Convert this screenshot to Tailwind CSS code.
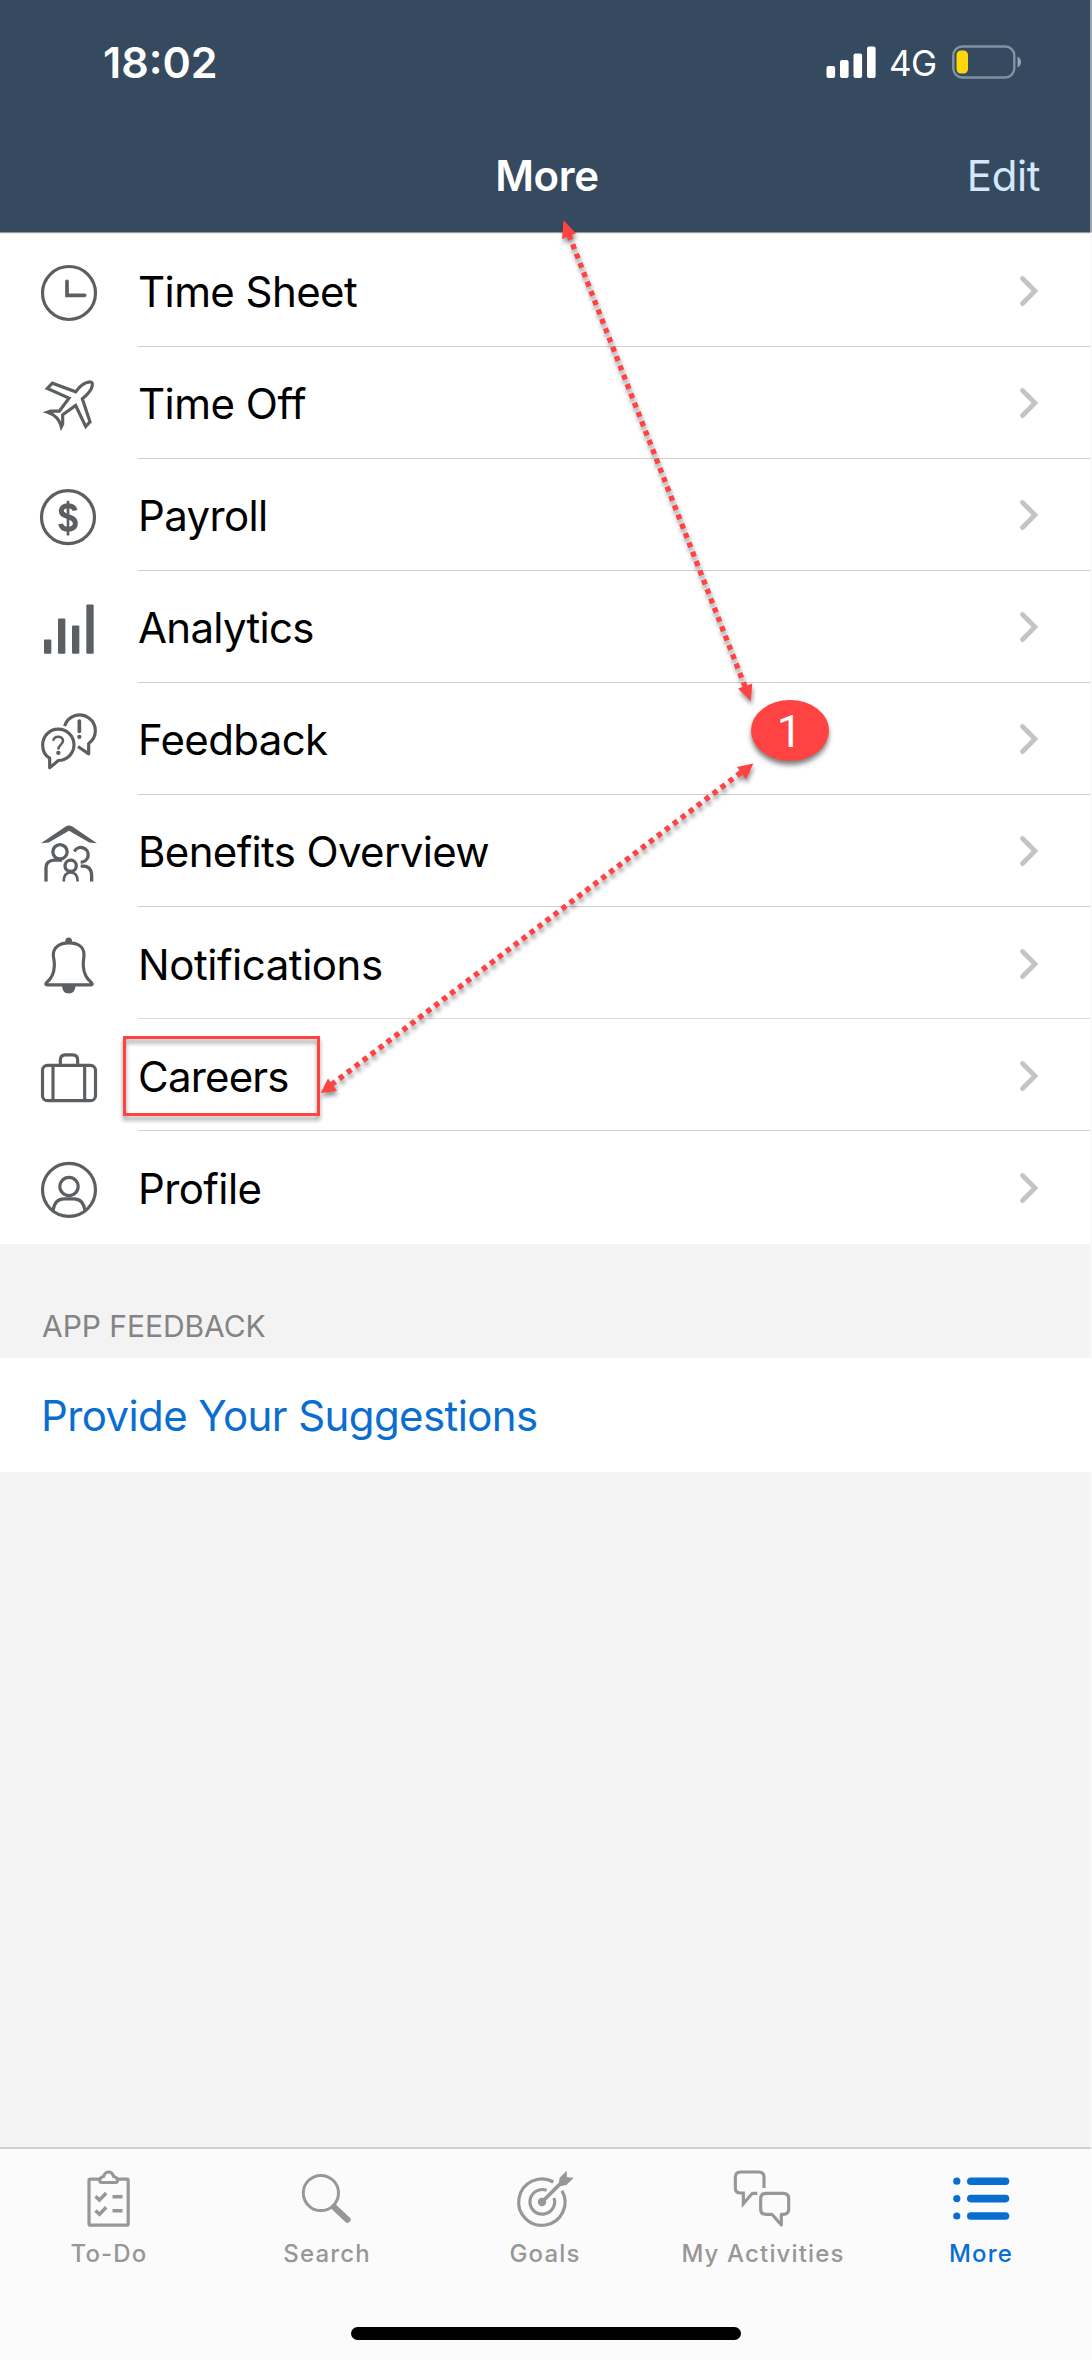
<!DOCTYPE html>
<html lang="en">
<head>
<meta charset="utf-8">
<title>More</title>
<script src="https://cdn.jsdelivr.net/npm/@tailwindcss/browser@4"></script>
</head>
<body class="bg-white">
<div class="relative flex h-[2360px] w-[1092px] flex-col overflow-hidden bg-[#f3f3f3] font-['Inter',sans-serif] text-[42px] leading-[50px] text-black">

  <header class="flex h-[234px] flex-none flex-col border-b border-[#eceae9] bg-[#354a5f]">
    <div class="flex h-[120px] items-center pt-[4px] pr-[70px] pl-[103px] text-white">
      <span class="text-[43px] font-semibold">18:02</span>
      <svg class="ml-auto h-[34px] w-[50px]" viewBox="0 0 50 34" fill="#fff"><rect x="0.5" y="21" width="8.6" height="12" rx="2"/><rect x="14" y="15" width="8.6" height="18" rx="2"/><rect x="27.500" y="8.500" width="8.600" height="24.500" rx="2"/><rect x="41" y="1.500" width="8.600" height="31.500" rx="2"/></svg>
      <span class="ml-[13px] w-[62px] pt-[2px] text-[35px] tracking-[-0.5px]">4G</span>
      <svg class="h-[34px] w-[71px]" viewBox="0 0 71 34"><rect x="2.300" y="1.500" width="61" height="31" rx="9" fill="none" stroke="#8391a0" stroke-width="2.400"/><rect x="5.500" y="5.500" width="11.500" height="23" rx="4.500" fill="#ffd60a"/><path d="M66.500 11.500Q70 13.500 70 17T66.500 22.500Z" fill="#98a3af"/></svg>
    </div>
    <div class="grid h-[113px] flex-none grid-cols-3 items-center border-b border-[#929aa2] pr-[52px] pl-[54px] font-normal">
      <span></span>
      <span class="text-center font-semibold tracking-[-0.35px] text-white">More</span>
      <span class="text-right tracking-[-0.44px] text-[#d1e8ff]">Edit</span>
    </div>
  </header>

  <ul class="flex w-[1090px] flex-none flex-col bg-white">
    <li class="flex h-[113px] items-center pl-[37px]">
      <svg class="h-16 w-16" viewBox="111 84 192 192" fill="none" stroke="#5b5f62" stroke-width="9.500"><circle cx="207" cy="186" r="79.500"/><path d="M201 151V193H254" stroke-width="11" stroke-linecap="round" stroke-linejoin="miter"/></svg>
      <div class="ml-[37px] flex h-full flex-1 items-center justify-between border-b border-[#cfcfd0] pr-[51px]"><span class="pt-[3px] tracking-[-0.57px]">Time Sheet</span><svg class="mt-px h-8 w-5" viewBox="0 0 20 32" fill="none" stroke="#c4c4c6" stroke-width="4.800" stroke-linecap="round"><path d="M3.500 3.500L16 16L3.500 28.500"/></svg></div>
    </li>
    <li class="flex h-[112px] items-center pl-[37px]">
      <svg class="h-16 w-16" viewBox="111 421.500 192 192" fill="none" stroke="#5b5f62" stroke-width="9.500"><path d="M227 484C240 465 256 455 270 454Q278 454 277 464C276 477 264 491 247 505L270 574L257 588L227 525L188 553V581L184 589C180 573 168 553 143 545L152 542H178L207 503L142 474L157 458Z"/></svg>
      <div class="ml-[37px] flex h-full flex-1 items-center justify-between border-b border-[#cfcfd0] pr-[51px]"><span class="pt-[3px] tracking-[-0.5px]">Time Off</span><svg class="mt-px h-8 w-5" viewBox="0 0 20 32" fill="none" stroke="#c4c4c6" stroke-width="4.800" stroke-linecap="round"><path d="M3.500 3.500L16 16L3.500 28.500"/></svg></div>
    </li>
    <li class="flex h-[112px] items-center pl-[37px]">
      <svg class="h-16 w-16" viewBox="111 757.500 192 192" fill="none" stroke="#5b5f62" stroke-width="9.500"><circle cx="204" cy="860" r="79.500"/><path d="M225 840C223 830 216 826 204 826C191 826 184 832 184 841C184 864 226 853 226 879C226 890 217 896 204 896C191 896 184 891 182 880" stroke-width="15"/><path d="M204 811V915" stroke-width="8"/></svg>
      <div class="ml-[37px] flex h-full flex-1 items-center justify-between border-b border-[#cfcfd0] pr-[51px]"><span class="pt-[3px] tracking-[-0.64px]">Payroll</span><svg class="mt-px h-8 w-5" viewBox="0 0 20 32" fill="none" stroke="#c4c4c6" stroke-width="4.800" stroke-linecap="round"><path d="M3.500 3.500L16 16L3.500 28.500"/></svg></div>
    </li>
    <li class="flex h-[112px] items-center pl-[37px]">
      <svg class="h-16 w-16" viewBox="111 73.500 192 192" fill="#5b5f62"><rect x="132" y="207" width="22" height="43" rx="3"/><rect x="174" y="144" width="22" height="106" rx="3"/><rect x="216" y="165" width="22" height="85" rx="3"/><rect x="259" y="102" width="22" height="148" rx="3"/></svg>
      <div class="ml-[37px] flex h-full flex-1 items-center justify-between border-b border-[#cfcfd0] pr-[51px]"><span class="pt-[3px] tracking-[-0.7px]">Analytics</span><svg class="mt-px h-8 w-5" viewBox="0 0 20 32" fill="none" stroke="#c4c4c6" stroke-width="4.800" stroke-linecap="round"><path d="M3.500 3.500L16 16L3.500 28.500"/></svg></div>
    </li>
    <li class="flex h-[112px] items-center pl-[37px]">
      <svg class="h-16 w-16" viewBox="111 409.500 192 192" fill="none" stroke="#5b5f62" stroke-width="9.500"><path d="M149 563C136 555 128 541 128 524A47 47 0 1 1 175 570L149 592Z" stroke-linejoin="round"/><path d="M194 467A47 47 0 1 1 266 519V550L234 528" stroke-linejoin="round"/><path d="M160 511C160 494 189 495 189 511C189 523 175 522 175 537" stroke-width="7.500"/><path d="M238 452V483" stroke-width="11" stroke-linecap="round"/><circle cx="238" cy="499" r="6.500" fill="#5b5f62" stroke="none"/><circle cx="175" cy="547" r="6.500" fill="#5b5f62" stroke="none"/></svg>
      <div class="ml-[37px] flex h-full flex-1 items-center justify-between border-b border-[#cfcfd0] pr-[51px]"><span class="pt-[3px] tracking-[-0.65px]">Feedback</span><svg class="mt-px h-8 w-5" viewBox="0 0 20 32" fill="none" stroke="#c4c4c6" stroke-width="4.800" stroke-linecap="round"><path d="M3.500 3.500L16 16L3.500 28.500"/></svg></div>
    </li>
    <li class="flex h-[112px] items-center pl-[37px]">
      <svg class="h-16 w-16" viewBox="111 745.500 192 192" fill="none" stroke="#5b5f62" stroke-width="10"><path d="M123 818L197 768Q207 762 217 768L291 818L268 816L207 781L146 816Z" fill="#5b5f62" stroke="none"/><circle cx="180" cy="844" r="21.500"/><path d="M223 843A22 22 0 1 1 242 875"/><circle cx="212" cy="886" r="17"/><path d="M138 933V892Q138 871 162 869H186M242 887H252Q275 888 275 918V933"/><path d="M191 933Q191 906 212 906T233 933" stroke-width="8"/></svg>
      <div class="ml-[37px] flex h-full flex-1 items-center justify-between border-b border-[#cfcfd0] pr-[51px]"><span class="pt-[3px] tracking-[-0.65px]">Benefits Overview</span><svg class="mt-px h-8 w-5" viewBox="0 0 20 32" fill="none" stroke="#c4c4c6" stroke-width="4.800" stroke-linecap="round"><path d="M3.500 3.500L16 16L3.500 28.500"/></svg></div>
    </li>
    <li class="flex h-[112px] items-center pl-[37px]">
      <svg class="h-16 w-16" viewBox="111 91.500 192 192" fill="none" stroke="#5b5f62" stroke-width="9.500"><path d="M207 127C179 127 160 140 160 163C160 175 164 178 163 197C162 218 155 234 140 246Q134 253 142 253H272Q280 253 274 246C259 234 251 218 250 197C249 178 252 175 252 163C252 140 235 127 207 127Z"/><path d="M196 126V120Q197 111 206 111T216 120V126ZM186 255H227Q225 279 206 279T186 255Z" fill="#5b5f62" stroke="none"/></svg>
      <div class="ml-[37px] flex h-full flex-1 items-center justify-between border-b border-[#dcdcdd] pr-[51px]"><span class="pt-[4px] tracking-[-0.45px]">Notifications</span><svg class="mt-[2px] h-8 w-5" viewBox="0 0 20 32" fill="none" stroke="#c4c4c6" stroke-width="4.800" stroke-linecap="round"><path d="M3.500 3.500L16 16L3.500 28.500"/></svg></div>
    </li>
    <li class="flex h-[112px] items-center pl-[37px]">
      <svg class="h-16 w-16" viewBox="111 427.500 192 192" fill="none" stroke="#5b5f62" stroke-width="9.500"><rect x="127.500" y="494.500" width="159" height="106" rx="15"/><path d="M159 495V600M254 495V600M181 494V479Q181 463 196 463H218Q233 463 233 479V494"/></svg>
      <div class="ml-[37px] flex h-full flex-1 items-center justify-between border-b border-[#d2d2d3] pr-[51px]"><span class="pt-[4px] tracking-[-0.8px]">Careers</span><svg class="mt-[2px] h-8 w-5" viewBox="0 0 20 32" fill="none" stroke="#c4c4c6" stroke-width="4.800" stroke-linecap="round"><path d="M3.500 3.500L16 16L3.500 28.500"/></svg></div>
    </li>
    <li class="flex h-[113px] items-center pl-[37px]">
      <svg class="h-16 w-16" viewBox="111 766.500 192 192" fill="none" stroke="#5b5f62" stroke-width="9.500"><circle cx="207" cy="868" r="79.500"/><circle cx="207" cy="858" r="27.500"/><path d="M159 930C163 905 177 895 192 895H222C237 895 251 905 255 930"/></svg>
      <div class="ml-[37px] flex h-full flex-1 items-center justify-between pr-[51px]"><span class="pt-[3px] tracking-[-0.59px]">Profile</span><svg class="mt-px h-8 w-5" viewBox="0 0 20 32" fill="none" stroke="#c4c4c6" stroke-width="4.800" stroke-linecap="round"><path d="M3.500 3.500L16 16L3.500 28.500"/></svg></div>
    </li>
  </ul>

  <section class="flex flex-none flex-col">
    <h2 class="flex h-[114px] items-end pb-[14px] pl-[42px] text-[30px] leading-[36px] tracking-[-0.05px] text-[#848484]"><span>APP FEEDBACK</span></h2>
    <a class="flex h-[114px] items-center bg-white pt-[2px] pl-[41px] tracking-[-0.6px] text-[#0a6ed1]">Provide Your Suggestions</a>
  </section>

  <footer class="mt-auto flex h-[213px] flex-none flex-col items-center border-t-2 border-[#d0d0d0] bg-[#fbfbfb]">
    <nav class="flex w-full pr-[2px] pt-[18px] text-[24px] leading-[32px] font-medium tracking-[1.15px] text-[#979797]">
      <div class="flex flex-1 flex-col items-center gap-[7px]">
        <svg class="h-16 w-16" viewBox="77 2167 64 64" fill="none" stroke="#979797" stroke-width="3.200"><path d="M99.500 2179.200H90.500Q89 2179.200 89 2180.700V2223.700Q89 2225.200 90.500 2225.200H126.700Q128.200 2225.200 128.200 2223.700V2180.700Q128.200 2179.200 126.700 2179.200H117.500"/><path d="M101.500 2182.500Q99.500 2182.500 99.700 2180C100 2177.500 101.500 2177 103.500 2176.500C104.500 2173.500 106 2172 108.600 2172S112.800 2173.500 113.700 2176.500C115.700 2177 117.200 2177.500 117.500 2180Q117.700 2182.500 115.700 2182.500Z"/><path d="M95.500 2196.200L99.500 2200L106.200 2193M95.500 2210.500L99.500 2214.300L106.200 2207.300M112.500 2196.700H122.500M112.500 2210.700H122.500" stroke-width="3.400"/></svg>
        <span>To-Do</span>
      </div>
      <div class="flex flex-1 flex-col items-center gap-[7px]">
        <svg class="h-16 w-16" viewBox="295 2167 64 64" fill="none" stroke="#979797"><circle cx="320.900" cy="2193" r="17.600" stroke-width="3"/><path d="M334 2207L347.500 2219.700" stroke-width="6.200" stroke-linecap="round"/></svg>
        <span>Search</span>
      </div>
      <div class="flex flex-1 flex-col items-center gap-[7px]">
        <svg class="h-16 w-16" viewBox="99 51 192 192" fill="none" stroke="#979797" stroke-width="9.500"><path d="M220 96A69.500 69.500 0 1 0 246 122"/><path d="M200 121A37 37 0 1 0 222 144"/><circle cx="186" cy="156" r="12.500" fill="#979797" stroke="none"/><path d="M186 156L248 94" stroke-width="11"/><path d="M236 103L239 83L260 62L261 81L281 84L259 105L243 108Z" fill="#979797" stroke="none"/></svg>
        <span>Goals</span>
      </div>
      <div class="flex flex-1 flex-col items-center gap-[7px]">
        <svg class="h-16 w-16" viewBox="753 51 192 192" fill="none" stroke="#979797" stroke-width="9.500"><path d="M852 114V82Q852 66 836 66H782Q766 66 766 82V114Q766 129 782 129H790V161L815 132Q817 130 820 130H832"/><path d="M858 130H910Q926 130 926 146V178Q926 193 910 193H904V225L878 195Q876 193 873 193H858Q842 193 842 178V146Q842 130 858 130Z" stroke-linejoin="round"/></svg>
        <span>My Activities</span>
      </div>
      <div class="flex flex-1 flex-col items-center gap-[7px] text-[#0a6ed1]">
        <svg class="h-16 w-16" viewBox="949 2167 64 64" fill="#0a6ed1"><circle cx="956.800" cy="2181.200" r="3.600"/><circle cx="956.800" cy="2198.600" r="3.600"/><circle cx="956.800" cy="2216" r="3.600"/><rect x="967" y="2177.400" width="42.300" height="7.600" rx="3.800"/><rect x="967" y="2194.800" width="42.300" height="7.600" rx="3.800"/><rect x="967" y="2212.200" width="42.300" height="7.600" rx="3.800"/></svg>
        <span>More</span>
      </div>
    </nav>
    <div class="mt-auto mr-[1px] mb-[20px] h-[13px] w-[390px] rounded-full bg-black"></div>
  </footer>

  <!-- right screen edge -->
  <div class="absolute top-0 right-0 h-[2360px] w-[2px] bg-white/50"></div>

  <!-- annotations -->
  <div class="absolute top-[1036px] left-[123px] h-[80px] w-[197px] border-3 border-[#ff4343] drop-shadow-[0_4px_2px_rgba(0,0,0,0.4)]"></div>
  <svg class="absolute top-0 left-0 h-[1200px] w-[1092px] drop-shadow-[1px_4px_2px_rgba(0,0,0,0.4)]" viewBox="0 0 1092 1200" fill="#ff4343">
    <path d="M569 235L746 689M741 772.500L331 1085" fill="none" stroke="#ff4343" stroke-width="5.400" stroke-dasharray="5.200 4.800"/>
    <path d="M563.500 220L576 233.500L562 239ZM750.700 701L738 688.500L752.300 683.500ZM753.300 763.500L746 779.500L737 767ZM320.700 1093L328 1078.500L337 1091Z"/>
  </svg>
  <div class="absolute top-[700px] left-[750.500px] flex h-[61px] w-[78px] items-center justify-center rounded-[50%] bg-[#ff4343] pt-[2px] font-['Roboto',sans-serif] text-[45px] text-white shadow-[0_4px_5px_rgba(0,0,0,0.5)]">1</div>
</div>
</body>
</html>
